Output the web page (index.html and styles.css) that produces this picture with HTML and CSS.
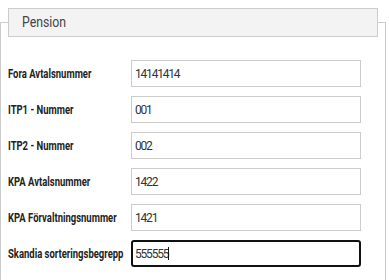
FILE: index.html
```html
<!DOCTYPE html>
<html lang="sv">
<head>
    <meta charset="UTF-8">
    <meta name="viewport" content="width=device-width, initial-scale=1.0">
    <title>Pension</title>
    <link rel="stylesheet" href="styles.css">
</head>
<body>
    <fieldset class="panel">
        <legend class="panel-title"><span>Pension</span></legend>
        <form class="pension-form">
            <label for="fora"><span>Fora Avtalsnummer</span></label>
            <input type="text" id="fora" value="14141414">

            <label for="itp1"><span>ITP1 - Nummer</span></label>
            <input type="text" id="itp1" value="001">

            <label for="itp2"><span>ITP2 - Nummer</span></label>
            <input type="text" id="itp2" value="002">

            <label for="kpa"><span>KPA Avtalsnummer</span></label>
            <input type="text" id="kpa" value="1422">

            <label for="kpaf"><span>KPA Förvaltningsnummer</span></label>
            <input type="text" id="kpaf" value="1421">

            <label for="skandia"><span>Skandia sorteringsbegrepp</span></label>
            <div class="field">
                <input type="text" id="skandia" class="active" value="555555">
                <span class="caret"></span>
            </div>
        </form>
    </fieldset>
</body>
</html>
```

FILE: styles.css
```css
body {
    margin: 0;
    padding: 8px 0 0 0;
    background-color: #fff;
    font-family: "Roboto", sans-serif;
}

.panel {
    width: 385px;
    box-sizing: border-box;
    margin: 0;
    padding: 0 7px 20px 7px;
    border: 1px solid #ccc;
}

.panel-title {
    box-sizing: border-box;
    width: 370px;
    height: 29px;
    padding: 0 13px;
    background-color: #f3f3f3;
    border: 1px solid #ccc;
    color: #444;
    font-size: 15px;
    line-height: 27px;
}

.panel-title span {
    display: inline-block;
    transform: scaleX(0.82);
    transform-origin: left center;
}

.pension-form {
    display: grid;
    grid-template-columns: 123px 230px;
    row-gap: 9px;
    align-items: center;
    padding-top: 23px;
}

label {
    color: #222;
    font-size: 12px;
    font-weight: bold;
    white-space: nowrap;
}

label span {
    display: inline-block;
    transform: scaleX(0.79);
    transform-origin: left center;
}

.field {
    position: relative;
}

input[type="text"] {
    display: block;
    box-sizing: border-box;
    width: 230px;
    height: 27px;
    margin: 0;
    padding: 0 3px;
    border: 1px solid #ccc;
    border-radius: 0;
    font-family: "Roboto", sans-serif;
    font-size: 12px;
    letter-spacing: -1.2px;
    color: #333;
    outline: none;
}

input.active {
    border: 2px solid #111;
    border-radius: 3px;
    padding: 0 2px;
}

.caret {
    position: absolute;
    left: 37px;
    top: 7px;
    width: 1px;
    height: 13px;
    background-color: #111;
}
```
